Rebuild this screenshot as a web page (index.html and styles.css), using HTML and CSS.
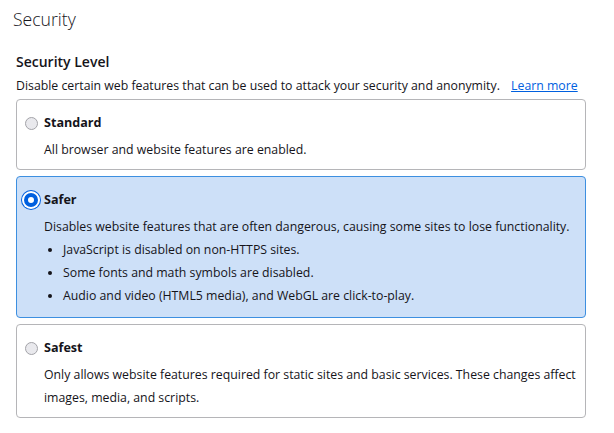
FILE: index.html
```html
<!DOCTYPE html>
<html lang="en">

<head>
    <meta charset="UTF-8">
    <title>Security</title>
    <link rel="stylesheet" href="styles.css">
</head>

<body>
    <div class="page">
        <h1 class="title">Security</h1>
        <section class="level">
            <h2>Security Level</h2>
            <p class="intro">Disable certain web features that can be used to attack your security and anonymity.
                <a href="#">Learn more</a></p>

            <div class="option">
                <label class="option-head"><span class="radio"><span></span></span>Standard</label>
                <p class="desc">All browser and website features are enabled.</p>
            </div>

            <div class="option selected">
                <label class="option-head"><span class="radio"><span></span></span>Safer</label>
                <p class="desc">Disables website features that are often dangerous, causing some sites to lose functionality.</p>
                <ul>
                    <li>JavaScript is disabled on non-HTTPS sites.</li>
                    <li>Some fonts and math symbols are disabled.</li>
                    <li>Audio and video (HTML5 media), and WebGL are click-to-play.</li>
                </ul>
            </div>

            <div class="option">
                <label class="option-head"><span class="radio"><span></span></span>Safest</label>
                <p class="desc">Only allows website features required for static sites and basic services. These changes affect images, media, and scripts.</p>
            </div>
        </section>
    </div>
</body>

</html>
```

FILE: styles.css
```css
body {
    margin: 0;
    background: #fff;
    color: #15141a;
    font-family: "Open Sans", "Noto Sans", sans-serif;
    font-size: 12.3px;
}

.page {
    padding: 0 28px 0 16px;
}

.title {
    margin: 0 0 0 -3px;
    padding-top: 6px;
    font-size: 17.6px;
    font-weight: 300;
    line-height: 26px;
}

.level {
    margin-top: 20px;

    h2 {
        margin: 0;
        font-size: 14px;
        font-weight: 600;
        line-height: 20px;
    }
}

.intro {
    margin: 4px 0 3px;
    line-height: 20px;

    a {
        margin-left: 8px;
        color: #0060df;
    }
}

.option {
    border: 1px solid #b5b5b8;
    border-radius: 4px;
    padding: 12px 6px 8px 5px;
    margin-bottom: 6px;

    ul {
        margin: 0 0 2px;
        padding-left: 41px;
        line-height: 23px;
    }
}

.option-head {
    display: flex;
    align-items: center;
    gap: 4px;
    font-size: 12.6px;
    font-weight: 700;
    line-height: 22px;
}

.radio {
    width: 18px;
    height: 18px;
    display: flex;
    align-items: center;
    justify-content: center;

    span {
        width: 11px;
        height: 11px;
        border-radius: 50%;
        border: 1px solid #a3a3a8;
        background: #e9e9ed;
    }
}

.desc {
    margin: 4px 0 0 22px;
    line-height: 23px;
}

.selected {
    background: #cde0f8;
    border-color: #3d8fe0;

    .radio span {
        width: 6px;
        height: 6px;
        border: 4px solid #0060df;
        background: #fff;
        box-shadow: 0 0 0 2px #fff, 0 0 0 3px #0060df;
    }
}
```
